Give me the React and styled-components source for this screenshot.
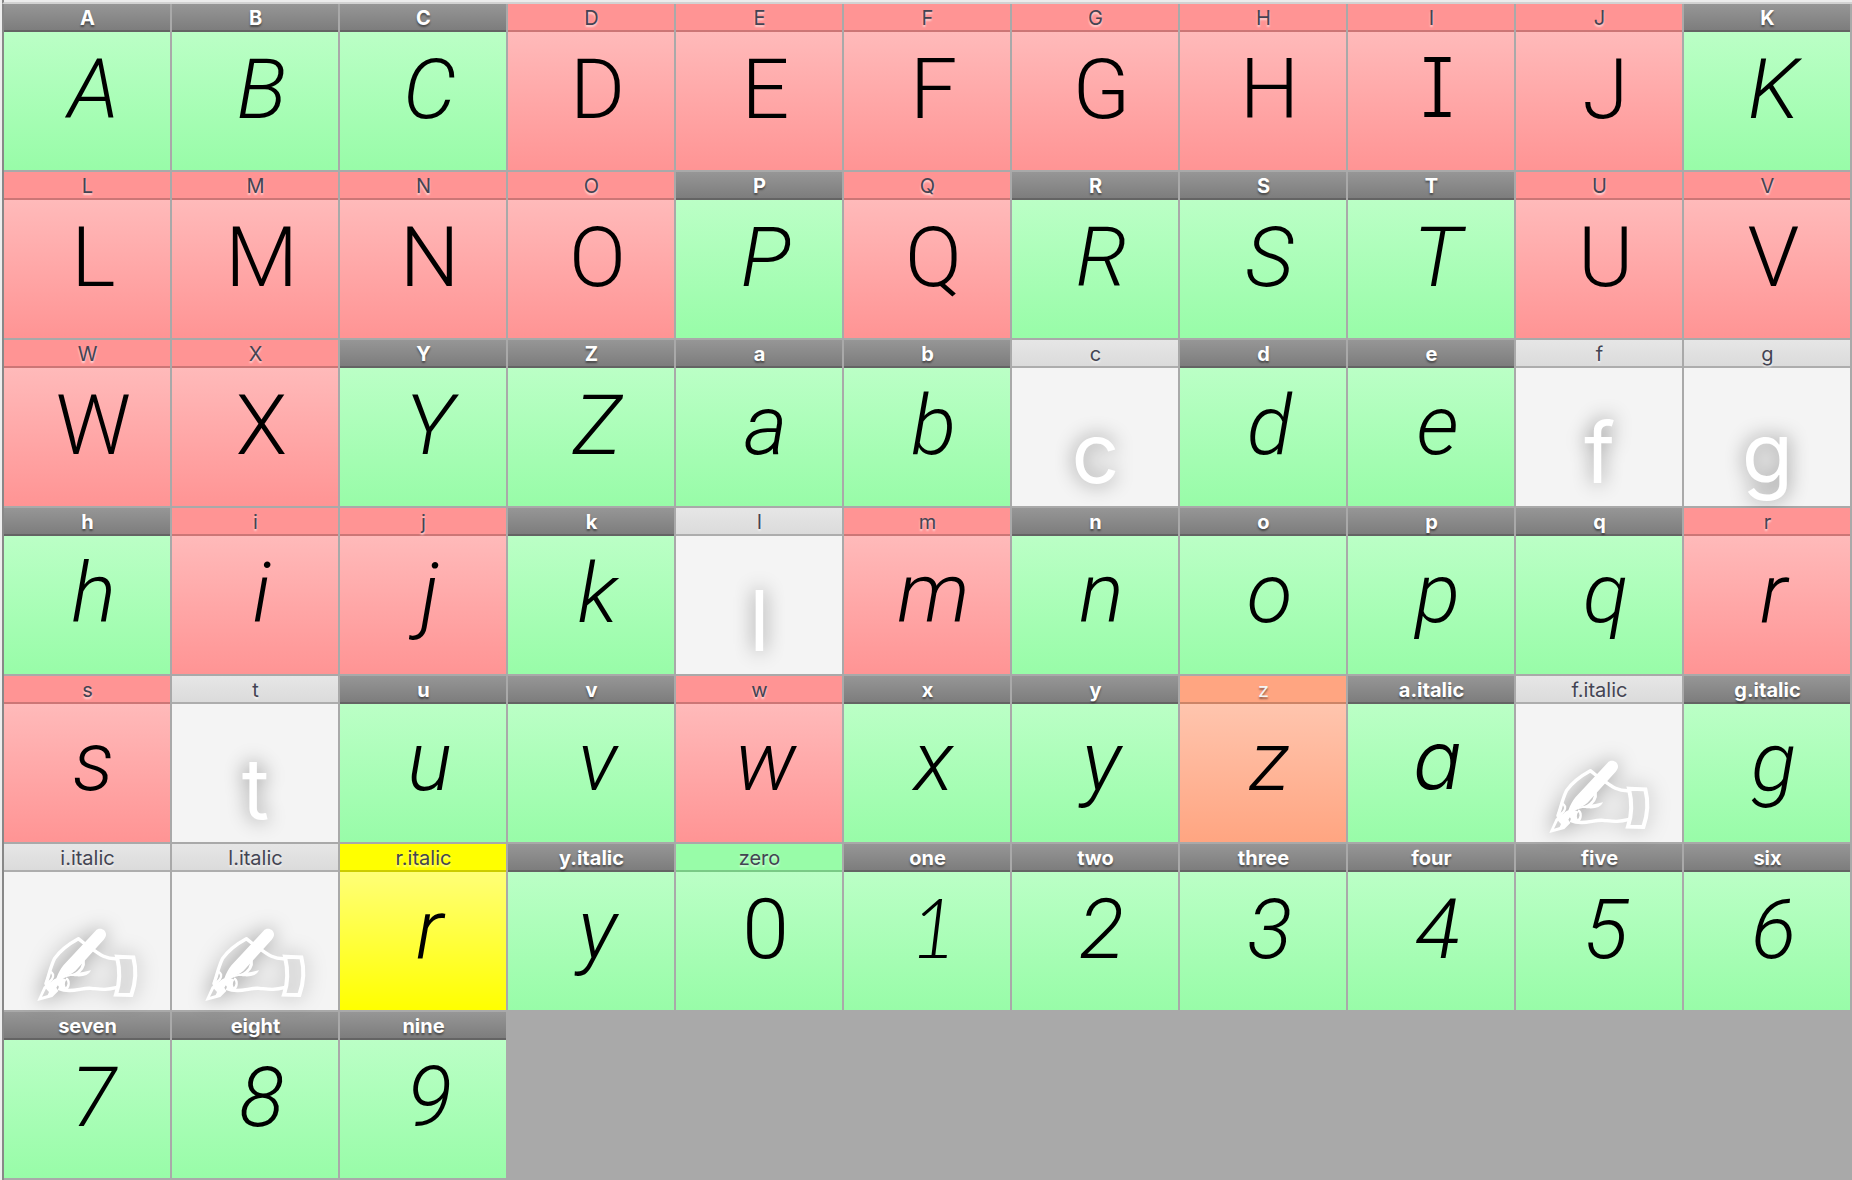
import React from "react";
import styled, { createGlobalStyle, css } from "styled-components";

const GlobalStyle = createGlobalStyle`
  *, *::before, *::after { box-sizing: border-box; }
  body {
    margin: 0;
    background: #a9a9a9;
    font-family: Inter, "Liberation Sans", sans-serif;
  }
`;

const tones = {
  green: { top: "#bbffc6", bottom: "#98fca8", rule: "#7aca86" },
  red: { top: "#ffbaba", bottom: "#ff9494", rule: "#cc7676" },
  orange: { top: "#ffc5ae", bottom: "#ffa581", rule: "#cc8467" },
  yellow: { top: "#ffff77", bottom: "#ffff00", rule: "#cccc00" },
  empty: { top: "#f4f4f4", bottom: "#f4f4f4", rule: "#adadad" },
};

const Window = styled.main`
  min-height: 100vh;
  display: flex;
  flex-direction: column;
  border-left: 2px solid #eeeeee;
`;

const TopEdge = styled.div`
  height: 4px;
  flex: none;
  background: #ececec;
  border-bottom: 2px solid #d2d2d2;
  border-left: 2px solid #888888;
`;

const Grid = styled.ul`
  flex: 1;
  margin: 0;
  padding: 0 2px 2px 0;
  list-style: none;
  display: grid;
  grid-template-columns: repeat(11, 1fr);
  align-content: start;
  gap: 2px;
  background: #a9a9a9;
  border-left: 2px solid #888888;
`;

const Cell = styled.li`
  min-width: 0;
  display: flex;
  flex-direction: column;
`;

const plainName = css`
  color: #434453;
  font-weight: 400;
  text-shadow: 0 2px 2px rgba(255, 255, 255, 0.65);
`;

const lightName = css`
  color: #f4f4f4;
  text-shadow: 0 2px 2px rgba(0, 0, 0, 0.45);
`;

const Name = styled.div`
  height: 28px;
  padding-left: 1px;
  font-size: 20px;
  line-height: 28px;
  text-align: center;
  white-space: nowrap;
  background: ${(p) => tones[p.$tone].bottom};
  border-bottom: 2px solid ${(p) => tones[p.$tone].rule};
  ${plainName}
  ${(p) =>
    p.$tone === "empty" &&
    css`
      background: linear-gradient(#e6e6e6, #dbdbdb);
    `}
  ${(p) => p.$tone === "orange" && lightName}
  ${(p) =>
    p.$done &&
    css`
      ${lightName}
      color: #ffffff;
      font-weight: 700;
      background: linear-gradient(#969696, #7d7d7d);
      border-bottom-color: #646464;
    `}
`;

const Preview = styled.div`
  height: 138px;
  display: flex;
  justify-content: center;
  background: linear-gradient(${(p) => tones[p.$tone].top}, ${(p) => tones[p.$tone].bottom});
`;

const faces = {
  main: css`
    font-family: Roboto, "Liberation Sans", sans-serif;
    font-weight: 300;
    font-size: 84px;
    line-height: 115px;
  `,
  serifed: css`
    font-family: Inter, "Liberation Sans", sans-serif;
    font-weight: 300;
    font-size: 82px;
    line-height: 112px;
    font-feature-settings: "cv08", "cv11";
  `,
  based: css`
    font-family: Lato, "Liberation Sans", sans-serif;
    font-weight: 300;
    font-size: 82px;
    line-height: 108px;
  `,
};

const Glyph = styled.span`
  padding-left: 13px;
  color: #000000;
  font-style: ${(p) => (p.$slanted ? "italic" : "normal")};
  ${(p) => faces[p.$face]}
`;

const Missing = styled.span`
  padding-top: 30px;
  padding-left: 1px;
  color: #ffffff;
  font-size: 84px;
  font-weight: 400;
  line-height: 109px;
  text-shadow: 0 0 20px rgba(0, 0, 0, 0.45);
`;

const HandIcon = styled.svg`
  width: 102px;
  height: 76px;
  margin-bottom: 7px;
  align-self: flex-end;
  overflow: visible;
  filter: drop-shadow(0 0 10px rgba(0, 0, 0, 0.34));
`;

function WritingHand() {
  return (
    <HandIcon viewBox="144 58 306 228" fill="none" stroke="#fff" strokeWidth="10" strokeLinejoin="round" aria-hidden="true">
      <path
        fill="#fff"
        stroke="none"
        d="M323 69C334 57 355 65 354 82C353 88 350 92 347 96L262 190C249 202 231 204 221 215L205 240L211 250L193 268L148 280L167 237L184 225C192 222 195 216 205 212C211 196 217 184 227 172Z"
      />
      <path fill="#d4d4d4" stroke="none" d="M174 243L183 253L179 262L162 267Z" />
      <path d="M173 230C182 207 187 178 200 152Q222 120 271 93L291 109" />
      <path d="M184 190Q203 199 191 216L171 234M183 202Q178 216 175 224" strokeWidth="7" />
      <path d="M314 125C333 139 353 155 388 153" />
      <path d="M211 242C250 258 280 239 310 242S350 248 388 239" />
      <path d="M286 158Q291 183 258 203" strokeWidth="9" />
      <path fill="#fff" stroke="none" d="M210 222C224 202 240 201 260 197L286 193L309 188C302 203 286 208 263 206C242 203 224 210 213 225Z" />
      <path d="M234 212C245 217 245 238 232 245" strokeWidth="7" />
      <path fill="#fff" stroke="none" d="M208 225C213 210 227 211 235 216C229 225 229 234 235 242C222 247 209 240 208 225Z" />
      <path d="M387 147L436 149C446 187 442 228 430 262L384 261C397 223 395 181 387 147Z" strokeLinejoin="miter" strokeWidth="12" />
    </HandIcon>
  );
}

const done = (name, char = name, extra) => ({ name, char, tone: "green", done: true, slanted: true, ...extra });
const red = (name, extra) => ({ name, char: name, tone: "red", ...extra });
const empty = (name, char = name) => ({ name, char, tone: "empty" });
const slanted = { slanted: true };

const glyphs = [
  done("A"), done("B"), done("C"), red("D"), red("E"), red("F"), red("G"), red("H"),
  red("I", { face: "serifed" }), red("J"), done("K"),
  red("L"), red("M"), red("N"), red("O"), done("P"), red("Q"), done("R"), done("S"), done("T"), red("U"), red("V"),
  red("W"), red("X"), done("Y"), done("Z"), done("a"), done("b"), empty("c"), done("d"), done("e"), empty("f"), empty("g"),
  done("h"), red("i", slanted), red("j", slanted), done("k"), empty("l"), red("m", slanted),
  done("n"), done("o"), done("p"), done("q"), red("r", slanted),
  red("s", slanted), empty("t"), done("u"), done("v"), red("w", slanted), done("x"), done("y"),
  { name: "z", char: "z", tone: "orange", slanted: true },
  done("a.italic", "a", { face: "serifed" }), empty("f.italic", null), done("g.italic", "g"),
  empty("i.italic", null), empty("l.italic", null),
  { name: "r.italic", char: "r", tone: "yellow", slanted: true },
  done("y.italic", "y"), { name: "zero", char: "0", tone: "green" },
  done("one", "1", { face: "based" }), done("two", "2"), done("three", "3"), done("four", "4"), done("five", "5"), done("six", "6"),
  done("seven", "7"), done("eight", "8"), done("nine", "9"),
];

function GlyphPreview({ glyph }) {
  if (glyph.char === null) return <WritingHand />;
  if (glyph.tone === "empty") return <Missing>{glyph.char}</Missing>;
  return (
    <Glyph $slanted={glyph.slanted} $face={glyph.face || "main"}>
      {glyph.char}
    </Glyph>
  );
}

export default function App() {
  return (
    <Window>
      <GlobalStyle />
      <TopEdge />
      <Grid>
        {glyphs.map((glyph) => (
          <Cell key={glyph.name}>
            <Name $tone={glyph.tone} $done={glyph.done}>{glyph.name}</Name>
            <Preview $tone={glyph.tone}>
              <GlyphPreview glyph={glyph} />
            </Preview>
          </Cell>
        ))}
      </Grid>
    </Window>
  );
}
